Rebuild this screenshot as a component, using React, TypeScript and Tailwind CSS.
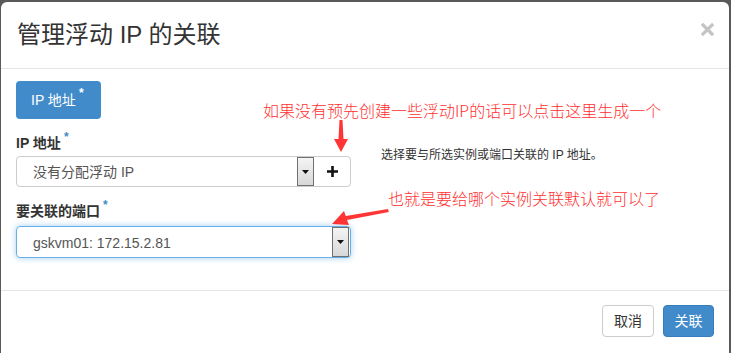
import React from 'react';

const font = { fontFamily: '"Liberation Sans", Arial, "Noto Sans CJK SC", sans-serif' };

const Caret: React.FC = () => (
    <div className="h-full w-[17px] border border-[#707070] bg-gradient-to-b from-[#f4f4f4] to-[#d8d8d8] flex items-center justify-center">
        <svg width="7" height="4" viewBox="0 0 7 4"><path d="M0 0h7L3.5 4z" fill="#111" /></svg>
    </div>
);

const Required: React.FC<{ light?: boolean }> = ({ light }) => (
    <span className={`relative -top-[7px] ml-[3px] text-[12px] font-bold ${light ? 'text-white' : 'text-[#428bca]'}`}>*</span>
);

const App: React.FC = () => {
    return (
        <div className="w-[731px] h-[353px] bg-[#5a5a5a] pt-[2px] pl-[1px] pr-[2px] overflow-hidden" style={font}>
            <div className="relative h-[360px] bg-white rounded-[6px]">
                {/* Header */}
                <div className="h-[67px] border-b border-[#e5e5e5] flex items-center justify-between pl-[16px] pr-[15px]">
                    <h4 className="text-[24px] text-[#333] pb-[1px]">管理浮动 IP 的关联</h4>
                    <svg width="13" height="13" viewBox="0 0 13 13" className="-mt-[11px]">
                        <path d="M2 2l9 9M11 2l-9 9" stroke="#c4c4c4" strokeWidth="3.2" strokeLinecap="square" />
                    </svg>
                </div>

                {/* Body */}
                <div className="h-[221px] px-[15px] pt-[12px]">
                    <div className="inline-flex items-center h-[38px] pl-[15px] pr-[17px] bg-[#428bca] rounded-[4px] text-white text-[14px]">
                        IP 地址<Required light />
                    </div>

                    <div className="flex mt-[14px]">
                        <div className="w-[335px]">
                            <div className="text-[14px] font-bold text-[#333] h-[20px] leading-[20px]">IP 地址<Required /></div>
                            <div className="mt-[3px] flex h-[31px] border border-[#ccc] rounded-[4px]">
                                <div className="flex-1 flex items-center pl-[16px] pr-[1px] text-[14px] text-[#555]">
                                    <span className="flex-1 pt-[2px]">没有分配浮动 IP</span>
                                    <Caret />
                                </div>
                                <div className="w-[35px] flex items-center justify-center">
                                    <svg width="11" height="11" viewBox="0 0 11 11"><path d="M5.5 0v11M0 5.5h11" stroke="#111" strokeWidth="2.6" /></svg>
                                </div>
                            </div>

                            <div className="mt-[14px] text-[14px] font-bold text-[#333] h-[20px] leading-[20px]">要关联的端口<Required /></div>
                            <div className="mt-[5px] flex items-center h-[32px] border border-[#66afe9] rounded-[4px] shadow-[0_0_6px_rgba(102,175,233,0.6)] pl-[16px] pr-[1px] text-[14px] text-[#555]">
                                <span className="flex-1 pt-[2px]">gskvm01: 172.15.2.81</span>
                                <Caret />
                            </div>
                        </div>
                        <div className="ml-[30px] mt-[13px] text-[12px] text-[#333]">选择要与所选实例或端口关联的 IP 地址。</div>
                    </div>
                </div>

                {/* Footer */}
                <div className="border-t border-[#e5e5e5] flex justify-end gap-[9px] pt-[14px] pr-[15px]">
                    <button className="h-[32px] w-[52px] border border-[#ccc] rounded-[4px] bg-white text-[14px] text-[#333]">取消</button>
                    <button className="h-[32px] w-[51px] border border-[#357ebd] rounded-[4px] bg-[#428bca] text-[14px] text-white">关联</button>
                </div>

                {/* Annotations */}
                <div className="absolute left-[262px] top-[96px] text-[16px] text-[#ff3030] whitespace-nowrap" style={{ fontFamily: '"Noto Sans CJK SC", sans-serif', fontWeight: 300 }}>
                    如果没有预先创建一些浮动IP的话可以点击这里生成一个
                </div>
                <div className="absolute left-[387px] top-[184px] text-[16px] text-[#ff3030] whitespace-nowrap" style={{ fontFamily: '"Noto Sans CJK SC", sans-serif', fontWeight: 300 }}>
                    也就是要给哪个实例关联默认就可以了
                </div>
                <svg className="absolute left-0 top-0 pointer-events-none" width="731" height="353" viewBox="0 0 731 353">
                    <path d="M338.5 118 L341.5 118 L342.5 137 L347 137 L340 150 L333 137 L337.5 137 Z" fill="#ff3535" />
                    <path d="M387 207 L387.8 210 L346 218 L348 223 L331 222 L343 209 L344.8 214 Z" fill="#ff3535" />
                </svg>
            </div>
        </div>
    );
};

export default App;
